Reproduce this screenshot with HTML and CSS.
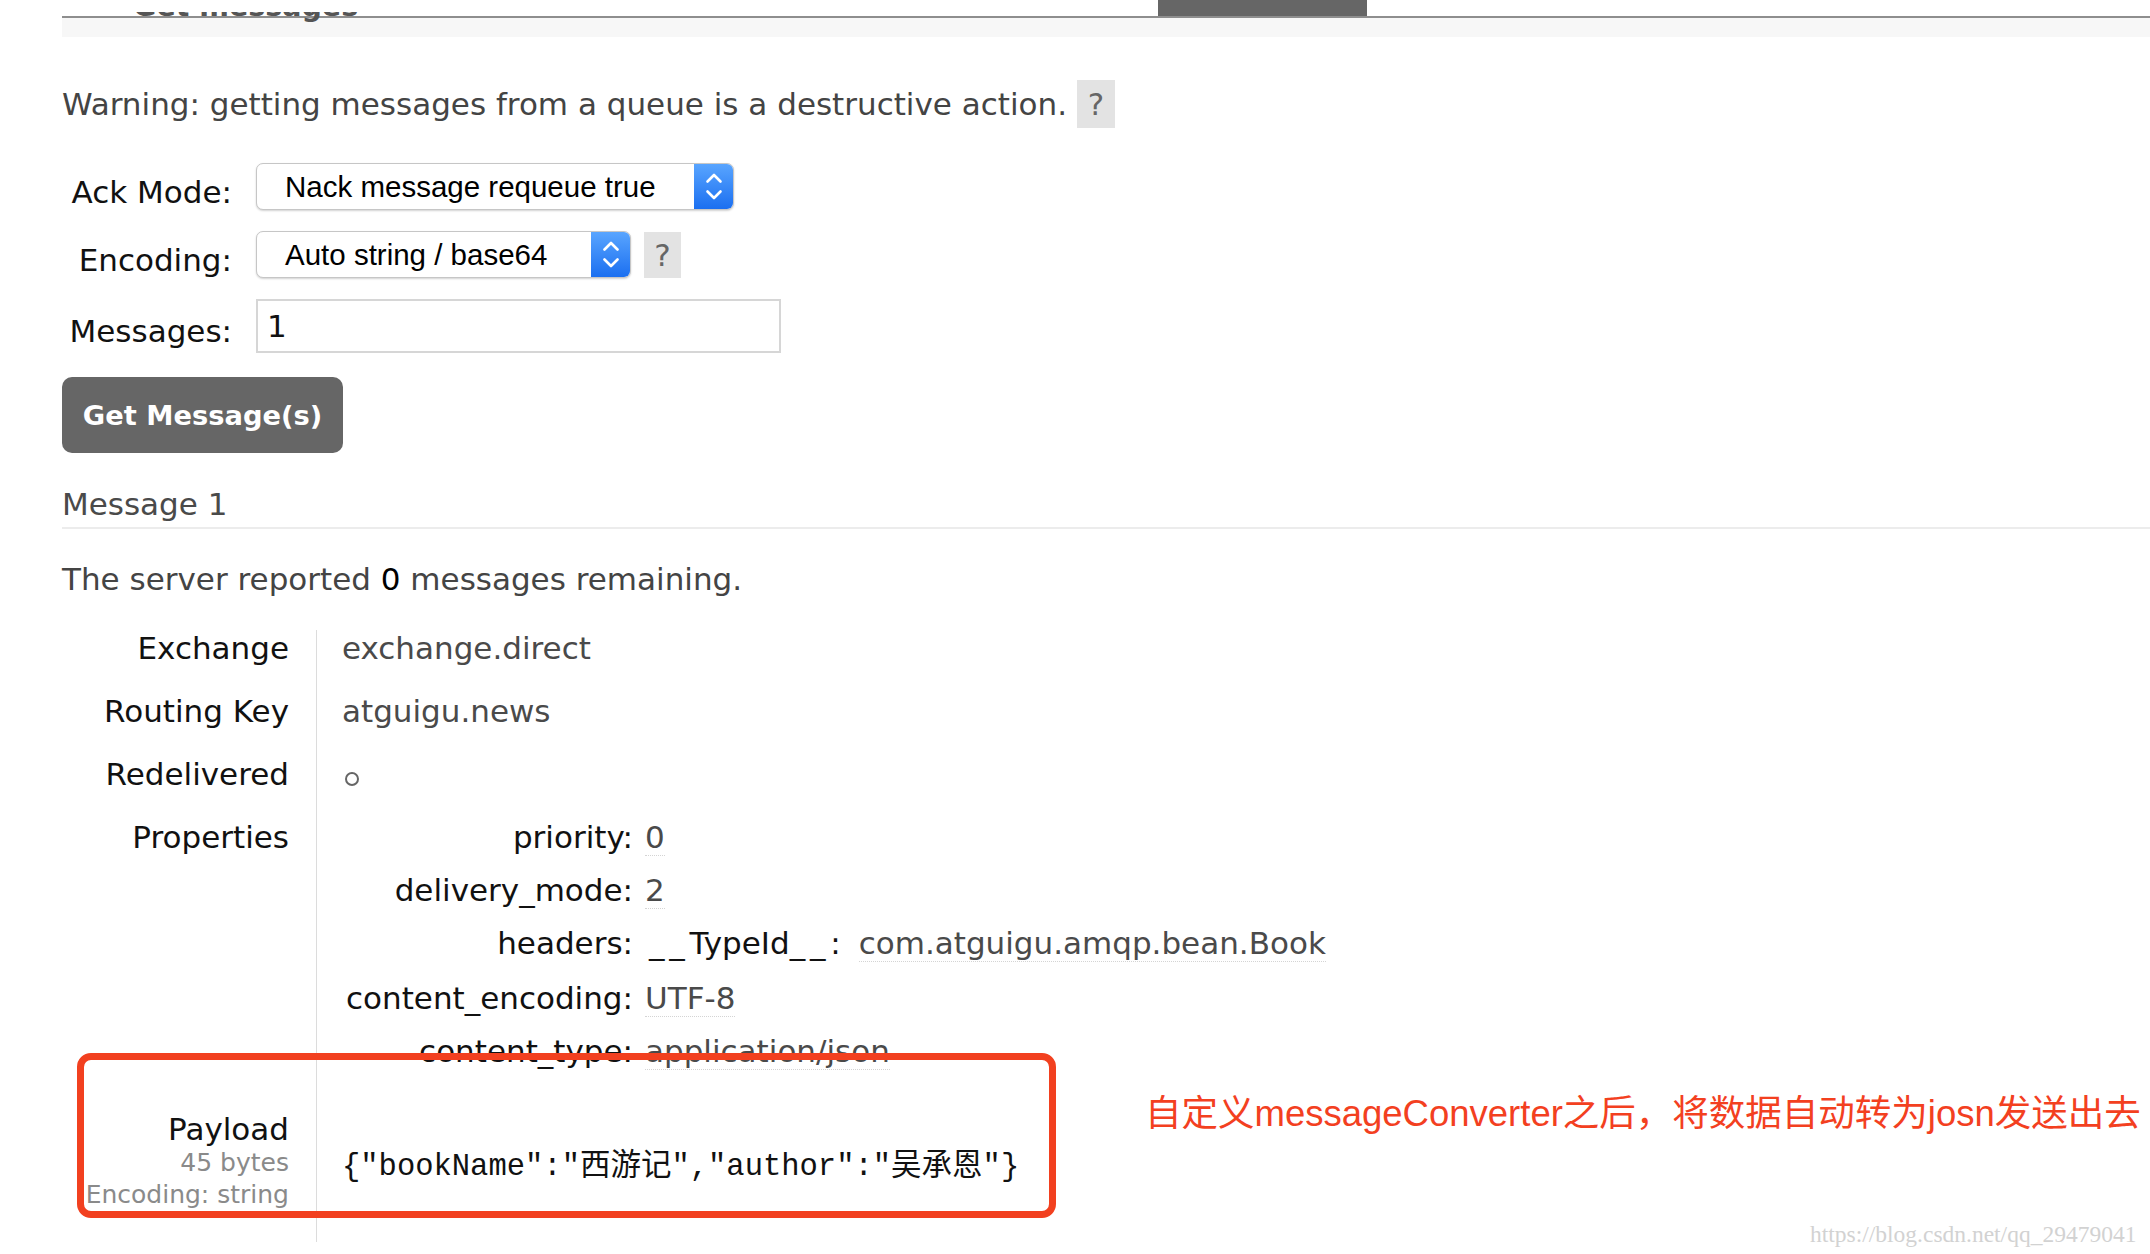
FILE: index.html
```html
<!DOCTYPE html>
<html lang="en">
<head>
<meta charset="utf-8">
<title>Get messages</title>
<link rel="stylesheet" href="styles.css">
</head>
<body>
<div class="page">
  <div class="head-row">
    <div class="head-clip"><h2 class="head-title">Get messages</h2></div>
    <div class="head-tab"></div>
  </div>
  <div class="head-band"></div>

  <div class="warning">
    <span>Warning: getting messages from a queue is a destructive action.</span>
    <span class="help">?</span>
  </div>

  <div class="form">
    <label class="form-label">Ack Mode:</label>
    <div class="select ack">
      <span class="select-text">Nack message requeue true</span>
      <span class="select-arrow"><svg width="40" height="47" viewBox="0 0 40 47"><defs><linearGradient id="g1" x1="0" y1="0" x2="0" y2="1"><stop offset="0" stop-color="#5aa6ff"/><stop offset="1" stop-color="#1a6ef0"/></linearGradient></defs><rect width="40" height="47" fill="url(#g1)"/><path d="M13.5 18.5 L20 12 L26.5 18.5 M13.5 28.5 L20 35 L26.5 28.5" fill="none" stroke="#fff" stroke-width="2.6" stroke-linecap="round" stroke-linejoin="round"/></svg></span>
    </div>

    <label class="form-label">Encoding:</label>
    <div class="inline-row">
      <div class="select enc">
        <span class="select-text">Auto string / base64</span>
        <span class="select-arrow"><svg width="40" height="47" viewBox="0 0 40 47"><defs><linearGradient id="g2" x1="0" y1="0" x2="0" y2="1"><stop offset="0" stop-color="#5aa6ff"/><stop offset="1" stop-color="#1a6ef0"/></linearGradient></defs><rect width="40" height="47" fill="url(#g2)"/><path d="M13.5 18.5 L20 12 L26.5 18.5 M13.5 28.5 L20 35 L26.5 28.5" fill="none" stroke="#fff" stroke-width="2.6" stroke-linecap="round" stroke-linejoin="round"/></svg></span>
      </div>
      <span class="help small">?</span>
    </div>

    <label class="form-label">Messages:</label>
    <input class="qty" type="text" value="1">
  </div>

  <button class="btn" type="button">Get Message(s)</button>

  <h3 class="msg-title">Message 1</h3>
  <p class="remaining">The server reported <b>0</b> messages remaining.</p>

  <table class="facts">
    <tr><th>Exchange</th><td>exchange.direct</td></tr>
    <tr><th>Routing Key</th><td>atguigu.news</td></tr>
    <tr><th>Redelivered</th><td><span class="circle"></span></td></tr>
    <tr>
      <th>Properties</th>
      <td>
        <table class="props">
          <tr><th>priority:</th><td><span class="val">0</span></td></tr>
          <tr><th>delivery_mode:</th><td><span class="val">2</span></td></tr>
          <tr class="hdr"><th>headers:</th><td><span class="hk"><span class="us">__</span>TypeId<span class="us">__</span>:</span><span class="val">com.atguigu.amqp.bean.Book</span></td></tr>
          <tr><th>content_encoding:</th><td><span class="val">UTF-8</span></td></tr>
          <tr><th>content_type:</th><td><span class="val">application/json</span></td></tr>
        </table>
      </td>
    </tr>
    <tr class="payload">
      <th>Payload<span class="sub">45 bytes</span><span class="sub">Encoding: string</span></th>
      <td><span class="payload-val">{"bookName":"西游记","author":"吴承恩"}</span></td>
    </tr>
  </table>

  <div class="callout"></div>
  <div class="note">自定义messageConverter之后，将数据自动转为josn发送出去</div>
  <div class="watermark">https://blog.csdn.net/qq_29479041</div>
</div>
</body>
</html>
```

FILE: styles.css
```css
html, body {
  margin: 0;
  padding: 0;
  background: #fff;
}

body {
  width: 2150px;
  height: 1254px;
  overflow: hidden;
  font-family: "DejaVu Sans", Verdana, sans-serif;
  font-size: 31px;
  color: #444;
}

.page {
  position: relative;
  box-sizing: border-box;
  height: 1254px;
  padding-left: 62px;
}

/* section header (scrolled, mostly cut off) */
.head-row {
  display: grid;
  grid-template-columns: 1096px 209px;
  grid-template-rows: 16px;
  height: 16px;
  border-bottom: 2px solid #8e8e8e;
}

.head-clip {
  height: 16px;
  padding-left: 71px;
  clip-path: inset(12px 0 -20px 0);
}

.head-title {
  margin: -11px 0 0 0;
  font-size: 28.5px;
  line-height: 35px;
  font-weight: bold;
  color: #555;
  white-space: nowrap;
}

.head-tab {
  height: 16px;
  background: #666;
}

.head-band {
  height: 19px;
  background: #f7f7f7;
}

/* warning */
.warning {
  display: flex;
  align-items: center;
  gap: 10px;
  height: 48px;
  margin-top: 43px;
  white-space: nowrap;
}

.help {
  display: inline-flex;
  align-items: center;
  justify-content: center;
  width: 38px;
  height: 48px;
  background: #e3e3e3;
  color: #666;
}

.help.small {
  width: 37px;
  height: 46px;
}

/* form */
.form {
  display: grid;
  grid-template-columns: 170px auto;
  column-gap: 24px;
  row-gap: 21px;
  margin-top: 35px;
  align-items: center;
  justify-items: start;
}

.form-label {
  justify-self: end;
  padding-top: 10px;
  line-height: 36px;
  color: #111;
}

.inline-row {
  display: flex;
  align-items: center;
  gap: 13px;
}

.select {
  display: flex;
  box-sizing: border-box;
  height: 47px;
  border: 1px solid #c6c6c6;
  border-radius: 7px;
  background: #fff;
  box-shadow: 0 1px 2px rgba(0, 0, 0, 0.18);
  overflow: hidden;
  font-family: "Liberation Sans", Arial, sans-serif;
  font-size: 29.5px;
  color: #000;
}

.select.ack {
  width: 478px;
}

.select.enc {
  width: 375px;
}

.select-text {
  flex: 1;
  display: flex;
  align-items: center;
  padding-left: 28px;
  white-space: nowrap;
}

.select-arrow {
  display: flex;
  width: 40px;
  margin: -1px -1px -1px 0;
}

.select-arrow svg {
  display: block;
  height: 47px;
}

.qty {
  box-sizing: border-box;
  width: 525px;
  height: 54px;
  margin: 0;
  padding: 0 9px;
  border: 2px solid #d6d6d6;
  border-radius: 0;
  font-family: "DejaVu Sans", Verdana, sans-serif;
  font-size: 31px;
  color: #111;
  background: #fff;
  outline: none;
}

.btn {
  display: block;
  margin: 24px 0 0;
  width: 281px;
  height: 76px;
  border: 0;
  border-radius: 10px;
  background: #666;
  color: #fff;
  font-family: "DejaVu Sans", Verdana, sans-serif;
  font-size: 27.3px;
  font-weight: bold;
  padding: 0;
}

/* message */
.msg-title {
  margin: 32.5px 0 0;
  padding-bottom: 5px;
  font-size: 31px;
  font-weight: normal;
  line-height: 36px;
  color: #4a4a4a;
  border-bottom: 2px solid #ececec;
}

.remaining {
  margin: 32px 0 0;
  line-height: 36px;
}

.remaining b {
  font-weight: normal;
  color: #000;
}

.facts {
  margin-top: 33px;
  border-collapse: collapse;
  border-spacing: 0;
}

.facts > tbody > tr > th {
  width: 227px;
  padding: 13.5px 27px 13.5px 0;
  text-align: right;
  vertical-align: top;
  font-weight: normal;
  line-height: 36px;
  color: #111;
  white-space: nowrap;
}

.facts > tbody > tr > td {
  padding: 13.5px 25px;
  border-left: 1px solid #dcdcdc;
  vertical-align: top;
  line-height: 36px;
  color: #4a4a4a;
  white-space: nowrap;
}

.facts > tbody > tr:first-child > th,
.facts > tbody > tr:first-child > td {
  padding-top: 0;
}

.circle {
  display: inline-block;
  box-sizing: border-box;
  width: 14px;
  height: 14px;
  margin-left: 3px;
  border: 2px solid #666;
  border-radius: 50%;
  vertical-align: -1px;
}

.props {
  border-collapse: collapse;
  border-spacing: 0;
}

.props th {
  width: 291px;
  padding: 8.5px 12px 8.5px 0;
  text-align: right;
  font-weight: normal;
  line-height: 36px;
  color: #111;
  white-space: nowrap;
}

.props td {
  padding: 8.5px 0;
  line-height: 36px;
  color: #4a4a4a;
  white-space: nowrap;
}

.props tr:first-child th,
.props tr:first-child td {
  padding-top: 0;
}

.props tr.hdr th,
.props tr.hdr td {
  padding-top: 8.5px;
  padding-bottom: 11px;
}

.val {
  border-bottom: 1px dotted #d4d4d4;
}

.hk {
  color: #111;
  padding-left: 4px;
  padding-right: 18px;
}

.us {
  letter-spacing: 4.8px;
}

.facts > tbody > tr.payload > th {
  padding-top: 20px;
  padding-bottom: 31px;
}

.facts > tbody > tr.payload > td {
  padding: 28px 25px 31px;
  vertical-align: middle;
}

.sub {
  display: block;
  font-size: 25px;
  line-height: 32px;
  color: #8a8a8a;
}

.payload-val {
  font-family: "Liberation Mono", "Noto Sans CJK SC", monospace;
  font-size: 30.5px;
  color: #111;
}

/* annotations laid over the screenshot */
.callout {
  position: absolute;
  left: 77px;
  top: 1053px;
  width: 979px;
  height: 165px;
  box-sizing: border-box;
  border: 7px solid #f2401f;
  border-radius: 14px;
}

.note {
  position: absolute;
  left: 1145px;
  top: 1092px;
  font-family: "Liberation Sans", "Noto Sans CJK SC", sans-serif;
  font-size: 36.5px;
  line-height: 44px;
  color: #f3401f;
  white-space: nowrap;
}

.watermark {
  position: absolute;
  left: 1810px;
  top: 1220px;
  font-family: "Liberation Serif", "Times New Roman", serif;
  font-size: 23.5px;
  line-height: 28px;
  color: #d2d2d2;
  white-space: nowrap;
}
```
